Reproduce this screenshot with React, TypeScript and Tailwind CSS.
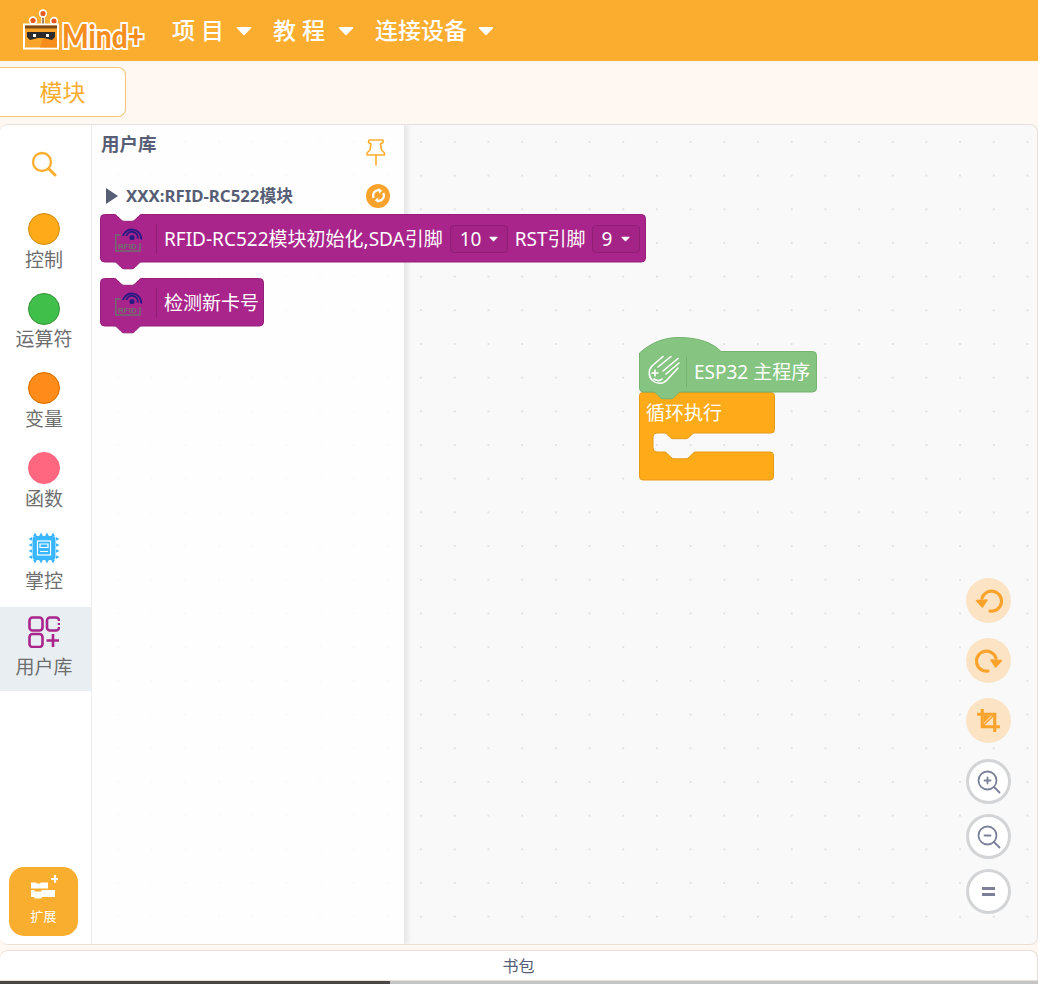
import React from "react";

const blockPath = (w: number, h: number) =>
  `M.5 4.5a4 4 0 0 1 4-4H14c1.5 0 2.2.5 3 1.3l4 4c.8.8 1.6 1.5 3 1.5h8c1.4 0 2.2-.7 3-1.5l4-4c.8-.8 1.5-1.3 3-1.3H${w - 4.5}a4 4 0 0 1 4 4V${h - 4}a4 4 0 0 1-4 4H42c-1.5 0-2.2.5-3 1.3l-4 4c-.8.8-1.6 1.5-3 1.5h-8c-1.4 0-2.2-.7-3-1.5l-4-4c-.8-.8-1.5-1.3-3-1.3H4.5a4 4 0 0 1-4-4z`;

const hatPath = (w: number, h: number) =>
  `M.5 16C12 6 24 .5 40 .5 60 .5 74 6 82 14.500H${w - 4.5}a4 4 0 0 1 4 4V${h - 4}a4 4 0 0 1-4 4H42c-1.5 0-2.2.5-3 1.3l-4 4c-.8.8-1.6 1.5-3 1.5h-8c-1.4 0-2.2-.7-3-1.5l-4-4c-.8-.8-1.5-1.3-3-1.3H4.5a4 4 0 0 1-4-4z`;

const cPath = `M.5 3.5a3 3 0 0 1 3-3H132a3.5 3.5 0 0 1 3.5 3.5V37.5a3.5 3.5 0 0 1-3.5 3.5H56c-1.5 0-2.2.5-3 1.3l-3 3c-.8.8-1.6 1.4-3 1.4H34c-1.4 0-2.2-.6-3-1.4l-3-3c-.8-.8-1.5-1.3-3-1.3H18a4 4 0 0 0-4 4V56a4 4 0 0 0 4 4h7c1.5 0 2.2.5 3 1.3l4 4c.8.8 1.6 1.5 3 1.5h12c1.4 0 2.2-.7 3-1.5l4-4c.8-.8 1.500-1.3 3-1.3h74a3.5 3.5 0 0 1 3.5 3.5V84.5a3.5 3.5 0 0 1-3.5 3.5H4a3.5 3.5 0 0 1-3.5-3.5z`;

function Caret({ className }: { className: string }) {
  return (
    <svg viewBox="0 0 16 10" className={className}>
      <path d="M1.5 1h13a.8.8 0 0 1 .6 1.3L8.6 9a.8.8 0 0 1-1.2 0L.9 2.3A.8.8 0 0 1 1.5 1z" fill="currentColor" />
    </svg>
  );
}

function MenuItem({ label, spaced, w }: { label: string; spaced?: boolean; w: string }) {
  return (
    <div className={`flex items-center ${w}`}>
      <span className={`text-[23px] font-medium text-white ${spaced ? "tracking-[6px]" : ""}`}>{label}</span>
      <Caret className="ml-auto h-[10px] w-[16px] text-white" />
    </div>
  );
}

function Logo() {
  return (
    <svg viewBox="0 0 126 42" className="h-[42px] w-[126px] overflow-visible">
      <path d="M13 14 10 10M20 14V4M28 14l3-4" stroke="#fff" strokeWidth="3.6" />
      <path d="M13 14 10 10M20 14V4M28 14l3-4" stroke="#7a4a1a" strokeWidth="1.4" />
      <g stroke="#fff" strokeWidth="1.6">
        <circle cx="10" cy="10.500" r="3.4" fill="#E8591F" />
        <circle cx="20" cy="3.500" r="3.4" fill="#E8591F" />
        <circle cx="31" cy="11" r="3.4" fill="#E8591F" />
      </g>
      <rect x="1" y="14.500" width="34" height="24" fill="#F9A42A" stroke="#fff" strokeWidth="2" />
      <path d="M20 28h14v9.500H17z" fill="#F68E1E" />
      <rect x="2" y="15.500" width="32" height="3" fill="#7a4a1a" />
      <path d="M4 22h28v5l-3 3-8-2h-6l-8 2-3-3z" fill="#2b2b2b" />
      <rect x="10" y="24" width="3" height="3" fill="#fff" />
      <rect x="23" y="24" width="3" height="3" fill="#fff" />
      <text
        x="39"
        y="38"
        fill="#F68E1E"
        stroke="#fff"
        strokeWidth="4"
        paintOrder="stroke"
        fontSize="32"
        fontWeight="900"
        fontFamily="Lato, sans-serif"
        textLength="82"
        lengthAdjust="spacingAndGlyphs"
      >
        Mind+
      </text>
    </svg>
  );
}

function Dot({ color, edge }: { color: string; edge: string }) {
  return <div className={`h-[32px] w-[32px] shrink-0 rounded-full border ${color} ${edge}`} />;
}

function ChipIcon() {
  const ticks = [7, 13, 19, 25];
  return (
    <svg viewBox="0 0 32 32" className="h-[32px] w-[32px] shrink-0">
      {ticks.map((t) => (
        <g key={t} fill="#38B6FF">
          <path d={`M${t - 1.8} 4 L${t} .5 L${t + 1.8} 4z`} />
          <path d={`M${t - 1.8} 28 L${t} 31.5 L${t + 1.8} 28z`} />
          <path d={`M4 ${t - 1.8} L.5 ${t} L4 ${t + 1.8}z`} />
          <path d={`M28 ${t - 1.8} L31.5 ${t} L28 ${t + 1.8}z`} />
        </g>
      ))}
      <rect x="4.500" y="4" width="23" height="24" rx="3" fill="#38B6FF" />
      <rect x="9.500" y="9" width="13" height="14" fill="none" stroke="#fff" strokeWidth="1.2" />
      <path d="M12 12h8v3.500h-8zM12 19.500h8" fill="none" stroke="#fff" strokeWidth="1.2" />
    </svg>
  );
}

function LibIcon() {
  return (
    <svg viewBox="0 0 32 32" className="h-[32px] w-[32px] shrink-0" fill="none" stroke="#A9258B" strokeWidth="2.6">
      <rect x="1.500" y="1.500" width="13" height="13" rx="3" />
      <rect x="1.500" y="18" width="13" height="13" rx="3" />
      <path d="M31 5V4.500a3 3 0 0 0-3-3h-6a3 3 0 0 0-3 3v7a3 3 0 0 0 3 3h6a3 3 0 0 0 3-3V11M31 7v2" />
      <path d="M25 18v13M18.500 24.500H31" />
    </svg>
  );
}

function SideItem({ icon, label, h, gap, active }: { icon: React.ReactNode; label: string; h: string; gap: string; active?: boolean }) {
  return (
    <div className={`flex flex-col items-center pr-[3px] ${h} ${active ? "bg-[#E9EEF2]" : ""}`}>
      {icon}
      <span className={`text-[19px] leading-[28px] text-[#6E6E6E] ${gap}`}>{label}</span>
    </div>
  );
}

function RfidIcon() {
  return (
    <svg viewBox="0 0 30 26" className="h-[26px] w-[30px]">
      <path d="M7 8H1.800V24H26V16" fill="none" stroke="#6F6F6F" strokeWidth="1.500" />
      <text x="4" y="22" fontSize="8" fontWeight="700" fill="#6F6F6F" fontFamily="'Liberation Sans', sans-serif">
        RFID
      </text>
      <circle cx="18" cy="10.500" r="2.600" fill="#2A1A86" />
      <path d="M8.800 9a9.500 9.500 0 0 1 18.500 3.500M12.400 9a5.800 5.800 0 0 1 11.300 2.500" fill="none" stroke="#2A1A86" strokeWidth="1.900" />
    </svg>
  );
}

function Dropdown({ v, w }: { v: string; w: string }) {
  return (
    <div className={`flex h-[28px] items-center justify-between rounded-[4px] border border-[#8E1F75] bg-[#A32387] px-[9px] ${w}`}>
      <span>{v}</span>
      <Caret className="h-[6px] w-[9px] text-white" />
    </div>
  );
}

function PurpleBlock({ w, width, className, children }: { w: number; width: string; className?: string; children: React.ReactNode }) {
  return (
    <div className={`relative h-[49px] shrink-0 ${width} ${className ?? ""}`}>
      <svg className="absolute left-0 top-0 overflow-visible" width={w} height={49}>
        <path d={blockPath(w, 48)} fill="#A9258B" stroke="#94207A" strokeWidth="1" />
      </svg>
      <div className="relative flex h-[49px] items-center whitespace-nowrap text-[19px] text-white">
        <div className="ml-[14px] mt-[3px]"><RfidIcon /></div>
        <div className="ml-[12px] h-[30px] w-px bg-[#8E1F75]" />
        <div className="ml-[7px] flex items-center gap-[7px] pt-[1px]">{children}</div>
      </div>
    </div>
  );
}

function CircleBtn({ children, plain }: { children: React.ReactNode; plain?: boolean }) {
  return (
    <div className={`flex h-[45px] w-[45px] items-center justify-center rounded-full ${plain ? "border-[3px] border-[#D3D4D6] bg-white" : "bg-[#FCE3C3]"}`}>
      {children}
    </div>
  );
}

function Mag({ kind }: { kind: "plus" | "minus" }) {
  return (
    <svg viewBox="0 0 24 24" className="h-[24px] w-[24px]" fill="none" stroke="#7C8099" strokeWidth="1.800" strokeLinecap="round">
      <circle cx="10.500" cy="10.500" r="9" />
      <path d="M17 17l5.500 5.500" />
      <path d="M7.500 10.500h6" />
      {kind === "plus" && <path d="M10.500 7.500v6" />}
    </svg>
  );
}

function Turn({ flip }: { flip?: boolean }) {
  return (
    <svg viewBox="0 0 28 28" className={`h-[28px] w-[28px] ${flip ? "-scale-x-100" : ""}`}>
      <path d="M7 11A10 10 0 1 1 15 24" fill="none" stroke="#FAA32C" strokeWidth="3.200" strokeLinecap="round" />
      <path d="M1.500 13.500 12 13 7.300 20z" fill="#FAA32C" stroke="#FAA32C" strokeWidth="1.500" strokeLinejoin="round" />
    </svg>
  );
}

function CropIcon() {
  return (
    <svg viewBox="0 0 24 24" className="h-[25px] w-[25px]" fill="none" stroke="#FAA32C">
      <path d="M6 1v17h17M1 6h17v17" strokeWidth="3" />
      <path d="M7 17 17 7" strokeWidth="1.500" />
      <path d="M7.500 7.500h7l-7 7z" fill="#FAA32C" stroke="none" />
    </svg>
  );
}

export default function App() {
  return (
    <div className="flex h-[984px] w-[1038px] flex-col overflow-hidden bg-[#FFF7F1] font-['Noto_Sans','Noto_Sans_CJK_SC',sans-serif]">
      <header className="flex h-[61px] shrink-0 items-center bg-[#FAAD2F] pl-[23px]">
        <Logo />
        <nav className="ml-[23px] flex items-center gap-[21px]">
          <MenuItem label="项目" spaced w="w-[80px]" />
          <MenuItem label="教程" spaced w="w-[81px]" />
          <MenuItem label="连接设备" w="w-[119px]" />
        </nav>
      </header>

      <div className="h-[63px] shrink-0 pt-[6px]">
        <div className="flex h-[50px] w-[126px] items-center justify-center rounded-r-[8px] border border-l-0 border-[#F5C578] bg-white pt-[1px] text-[23px] text-[#FAAE30]">
          模块
        </div>
      </div>

      <main className="relative flex h-[821px] shrink-0 overflow-hidden rounded-[8px] border border-l-0 border-[#E9DFD7] bg-[#F9F9F9] bg-[radial-gradient(circle,#E3E3E3_1px,transparent_1.3px)] bg-[length:33.7px_33.7px]">
        <aside className="flex w-[92px] shrink-0 flex-col border-r border-[#EEEEEE] bg-white">
          <div className="flex h-[88px] shrink-0 items-center justify-center pb-[11px] pr-[3px]">
            <svg viewBox="0 0 26 26" className="h-[26px] w-[26px]" fill="none" stroke="#FBAE30">
              <circle cx="11" cy="11" r="9" strokeWidth="2.300" />
              <path d="M18 18l6 6" strokeWidth="3" strokeLinecap="round" />
            </svg>
          </div>
          <SideItem h="h-[80px]" gap="mt-[1px]" label="控制" icon={<Dot color="bg-[#FFAB19]" edge="border-[#CF8B17]" />} />
          <SideItem h="h-[79px]" gap="" label="运算符" icon={<Dot color="bg-[#40BF4A]" edge="border-[#389438]" />} />
          <SideItem h="h-[80px]" gap="mt-[1px]" label="变量" icon={<Dot color="bg-[#FF8C1A]" edge="border-[#DB6E00]" />} />
          <SideItem h="h-[80px]" gap="mt-[1px]" label="函数" icon={<Dot color="bg-[#FF6680]" edge="border-[#FF6680]" />} />
          <SideItem h="h-[75px]" gap="mt-[3px]" label="掌控" icon={<ChipIcon />} />
          <SideItem h="h-[84px] pt-[9px]" gap="mt-[5px]" active label="用户库" icon={<LibIcon />} />
          <div className="mt-auto mb-[8px] ml-[9px] flex h-[69px] w-[69px] flex-col items-center rounded-[15px] bg-[#FAAE30] pt-[8px]">
            <svg viewBox="0 0 28 24" className="h-[24px] w-[28px]">
              <path d="M1 7.500h5l1 1h3l1-1h7v6H1zM1 15h3l1 1.500h6l1-1.500h13v7H12l-1 1.500H5l-1-1.500H1z" fill="#fff" />
              <path d="M22 4h6M25 1v6" stroke="#fff" strokeWidth="2.200" strokeLinecap="round" />
            </svg>
            <span className="mt-[9px] text-[13px] leading-[16px] text-white">扩展</span>
          </div>
        </aside>

        <section className="relative flex w-[313px] shrink-0 flex-col border-r border-[#E8E8E8] bg-white/80 pl-[9px] shadow-[3px_0_5px_rgba(0,0,0,0.08)]">
          <div className="flex h-[55px] shrink-0 items-start justify-between pr-[17px] pt-[6px]">
            <span className="text-[18.5px] font-bold leading-[26px] text-[#575E75]">用户库</span>
            <svg viewBox="0 0 22 28" className="mt-[7px] h-[28px] w-[22px]" fill="none" stroke="#FBAE30" strokeWidth="1.600" strokeLinejoin="round" strokeLinecap="round">
              <path d="M4 2h14v2.500l-2.500 1.500 1 6 3 3v2H2v-2l3-3 1-6L3.500 4.500z" />
              <path d="M11 17v10" />
            </svg>
          </div>
          <div className="mb-[3px] flex h-[31px] shrink-0 items-center pr-[14px]">
            <svg viewBox="0 0 12 16" className="ml-[5px] h-[16px] w-[12px]">
              <path d="M0 0l12 8-12 8z" fill="#575E75" />
            </svg>
            <span className="ml-[8px] text-[16.8px] font-bold text-[#575E75]">XXX:RFID-RC522模块</span>
            <div className="ml-auto flex h-[24px] w-[24px] items-center justify-center rounded-full bg-[#F9A32C]">
              <svg viewBox="0 0 16 16" className="h-[15px] w-[15px]" fill="none" stroke="#fff" strokeWidth="2.400">
                <path d="M3 10.500A5.500 5.500 0 0 1 9 2.500" />
                <path d="M13 5.500a5.500 5.500 0 0 1-6 8" />
                <path d="M8 0l4 3-3.500 3zM8 16l-4-3 3.500-3z" fill="#fff" stroke="none" />
              </svg>
            </div>
          </div>
          <div className="-ml-[1px]">
            <PurpleBlock w={546} width="w-[546px]">
              <span>RFID-RC522模块初始化,SDA引脚</span>
              <Dropdown v="10" w="w-[58px]" />
              <span>RST引脚</span>
              <Dropdown v="9" w="w-[48px] -ml-px" />
            </PurpleBlock>
            <PurpleBlock w={164} width="w-[164px]" className="mt-[15px]">
              <span>检测新卡号</span>
            </PurpleBlock>
          </div>
        </section>

        <div className="relative flex-1">
          <div className="absolute left-[234px] top-[212px] w-[180px]">
            <div className="relative z-10 h-[55px]">
              <svg className="absolute left-0 top-0 overflow-visible" width={178} height={62}>
                <path d={hatPath(178, 55)} fill="#85C481" stroke="#75B36F" strokeWidth="1" />
              </svg>
              <div className="relative flex h-[55px] items-center whitespace-nowrap pt-[15px] text-[19px] text-white">
                <svg viewBox="0 0 34 32" className="ml-[7px] -mt-[3px] h-[32px] w-[34px]" fill="none" stroke="#fff" strokeWidth="1.600" strokeLinecap="round">
                  <path d="M6 11A10 10 0 1 0 21 25L32 13" />
                  <path d="M6 11 17 1.500M12 12 25 1.500M17 16 32 3.500M20 19 33 8" />
                  <path d="M9 15v6M6 18h6M8 24c3 2 6 2 8 0" />
                </svg>
                <div className="ml-[6px] -mt-[1px] h-[30px] w-px bg-[#75B36F]" />
                <span className="ml-[7px]">ESP32 主程序</span>
              </div>
            </div>
            <div className="relative h-[89px]">
              <svg className="absolute left-0 top-0 overflow-visible" width={136} height={89}>
                <path d={cPath} fill="#FFAB19" stroke="#E39A17" strokeWidth="1" />
              </svg>
              <div className="relative h-[41px] pl-[7px] pt-[1px] text-[19px] leading-[41px] text-white">循环执行</div>
            </div>
          </div>

          <div className="absolute right-[26px] top-[453px] flex flex-col items-center">
            <div className="flex flex-col gap-[15px]">
              <CircleBtn><Turn /></CircleBtn>
              <CircleBtn><Turn flip /></CircleBtn>
              <CircleBtn><CropIcon /></CircleBtn>
            </div>
            <div className="mt-[16px] flex flex-col gap-[10px]">
              <CircleBtn plain><Mag kind="plus" /></CircleBtn>
              <CircleBtn plain><Mag kind="minus" /></CircleBtn>
              <CircleBtn plain>
                <div className="flex w-[13px] flex-col gap-[3px]">
                  <div className="h-[3px] bg-[#7C8099]" />
                  <div className="h-[3px] bg-[#7C8099]" />
                </div>
              </CircleBtn>
            </div>
          </div>
        </div>
      </main>

      <div className="mt-[5px] flex h-[31px] shrink-0 items-center justify-center rounded-t-[8px] border border-l-0 border-[#E9DFD7] bg-white text-[16px] text-[#575E75]">
        书包
      </div>
      <div className="flex h-[3px] shrink-0">
        <div className="w-[390px] bg-[#4A4644]" />
        <div className="flex-1 bg-[#C4C4C4]" />
      </div>
    </div>
  );
}
